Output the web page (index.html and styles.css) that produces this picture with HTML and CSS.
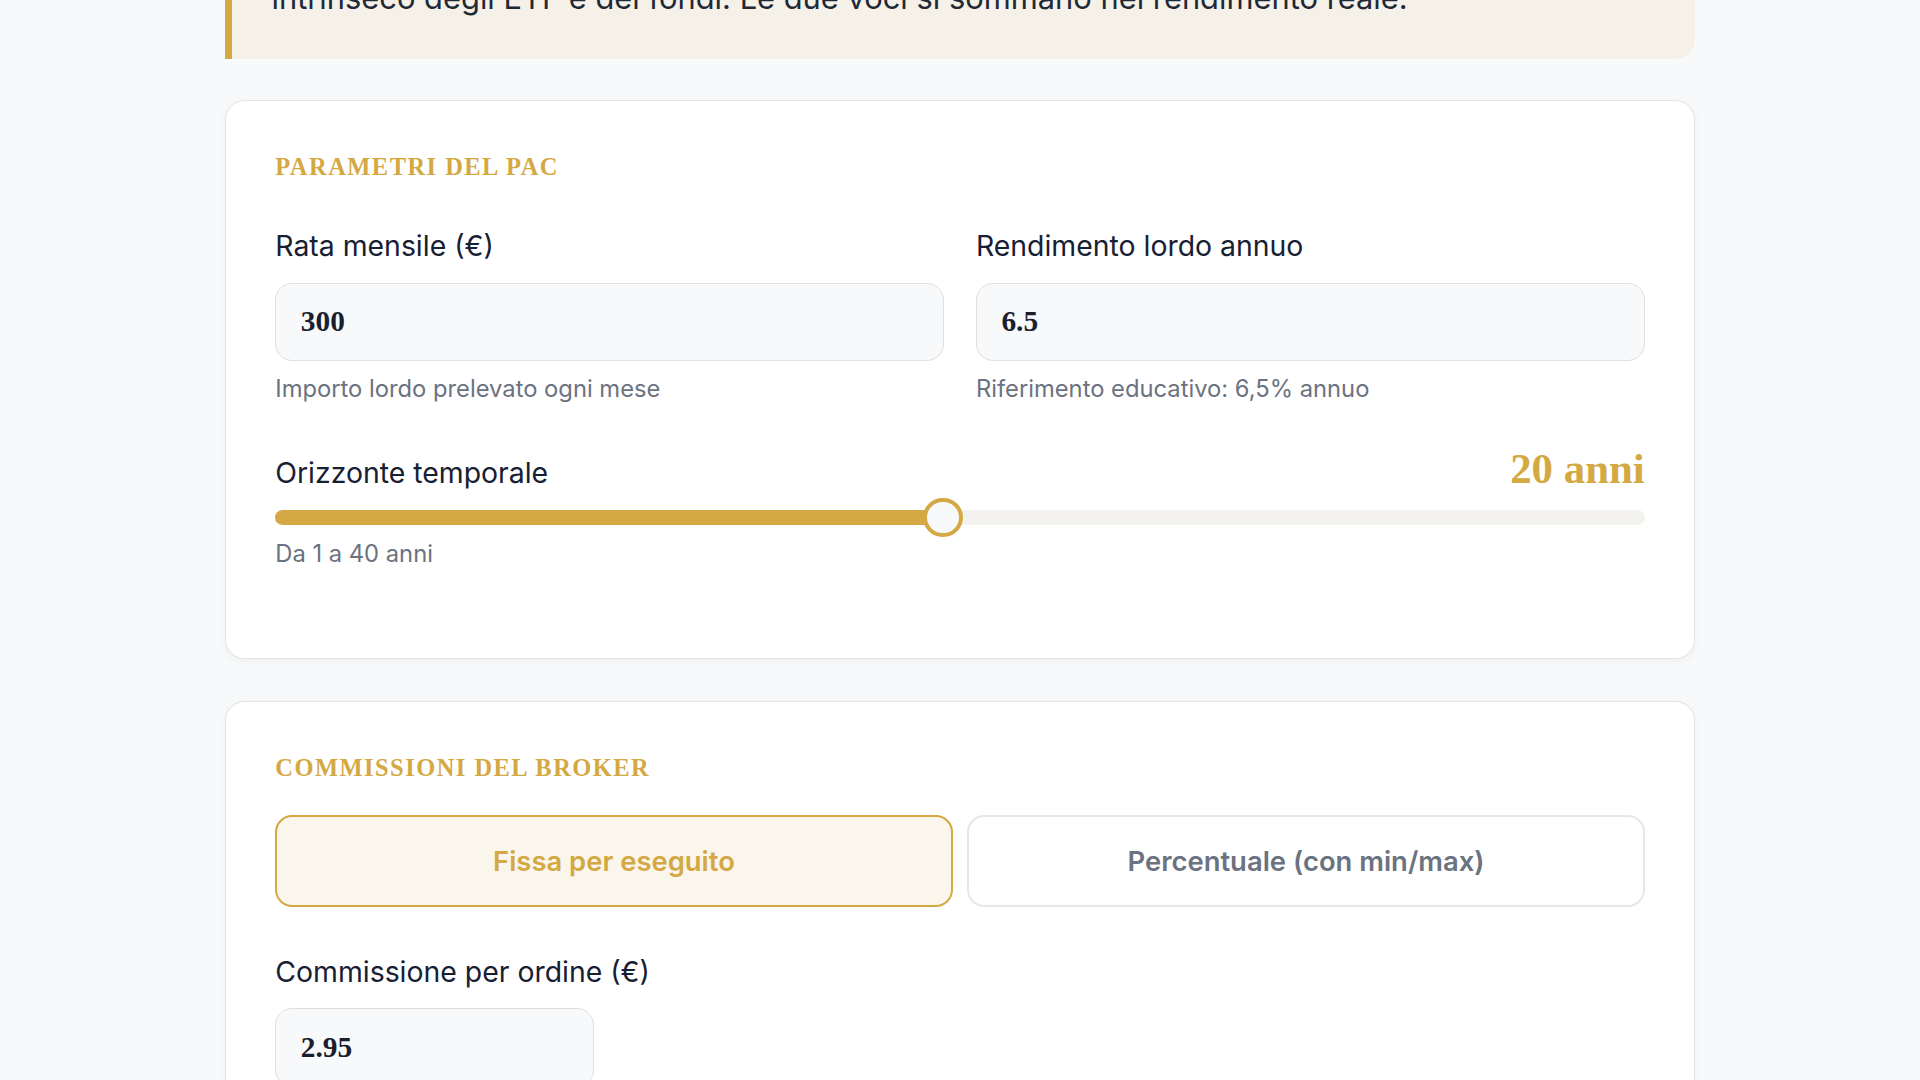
FILE: index.html
```html
<!DOCTYPE html>
<html lang="it">
<head>
<meta charset="UTF-8">
<meta name="viewport" content="width=device-width,initial-scale=1">
<title>Simulatore PAC – Commissioni del broker</title>
<link rel="stylesheet" href="styles.css">
</head>
<body>
<main class="wrap">

  <div class="note">
    <p>Nota: le commissioni del broker non vanno confuse con il TER, cioè il costo annuo di gestione<br>intrinseco degli ETF e dei fondi. Le due voci si sommano nel rendimento reale.</p>
  </div>

  <!-- parametri -->
  <section class="card">
    <h2 class="card-title">Parametri del PAC</h2>

    <div class="grid2 fields">
      <div class="field">
        <label for="rata">Rata mensile (€)</label>
        <input class="num" id="rata" type="text" value="300">
        <div class="hint">Importo lordo prelevato ogni mese</div>
      </div>
      <div class="field">
        <label for="rend">Rendimento lordo annuo</label>
        <input class="num" id="rend" type="text" value="6.5">
        <div class="hint">Riferimento educativo: 6,5% annuo</div>
      </div>
    </div>

    <div class="range-group">
      <div class="range-head">
        <label for="anni">Orizzonte temporale</label>
        <span class="range-val">20 anni</span>
      </div>
      <input class="range" id="anni" type="range" min="1" max="40" value="20" style="--pct:48.76%">
      <div class="hint">Da 1 a 40 anni</div>
    </div>
  </section>

  <!-- commissioni -->
  <section class="card">
    <h2 class="card-title">Commissioni del broker</h2>

    <div class="grid2 toggle">
      <button class="opt active">Fissa per eseguito</button>
      <button class="opt">Percentuale (con min/max)</button>
    </div>

    <div class="field fee">
      <label for="comm">Commissione per ordine (€)</label>
      <input class="num small" id="comm" type="text" value="2.95">
    </div>
  </section>

</main>
</body>
</html>
```

FILE: styles.css
```css
:root{--bg:#f8f9fa;--card:#fff;--txt:#172033;--sub:#6b7280;
      --gold:#d4a843;--gold-soft:#faf6ec;--line:#e6e3de;--note:#f5f1e8}
html{zoom:1.2245}
*{box-sizing:border-box}
body{margin:0;background:var(--bg);color:var(--txt);
     font-family:Inter,"Noto Sans",Arial,sans-serif}
.wrap{max-width:1200px;margin:-89px auto 0}

.note{background:var(--note);border-left:6px solid var(--gold);border-radius:0 16px 16px 0;
      padding:28px 32px 29px}
.note p{margin:0;font-size:25.2px;line-height:40px;color:#1f2937}

.card{background:var(--card);border:1px solid var(--line);border-radius:16px;padding:40px;
      margin-top:34px;box-shadow:0 2px 6px rgba(0,0,0,.04)}
.card-title{margin:0 0 24px;font-family:"Liberation Serif","Times New Roman",serif;font-weight:700;
      font-size:20px;line-height:28px;letter-spacing:1.2px;text-transform:uppercase;color:var(--gold)}

.grid2{display:grid;grid-template-columns:1fr 1fr}
.fields{gap:26px;margin-top:34px}
label{display:block;font-size:23.2px;line-height:32px;margin-bottom:14px}
.num{display:block;width:100%;height:64px;padding:0 20px;border:1.5px solid #e2dfda;border-radius:14px;
     background:var(--bg);color:#1a1f2e;font-family:"Liberation Serif","Times New Roman",serif;
     font-weight:700;font-size:24px;outline:none}
.num.small{width:260px}
.hint{margin-top:9px;font-size:19.4px;line-height:28px;color:var(--sub)}

.range-group{margin:38px 0 31px}
.range-head{display:flex;justify-content:space-between;align-items:baseline}
.range-head label{margin:0}
.range-val{font-family:"Liberation Serif","Times New Roman",serif;font-weight:700;font-size:35px;
     line-height:22px;color:var(--gold)}
.range{-webkit-appearance:none;appearance:none;display:block;width:100%;height:32px;margin:5px 0 0;
     background:transparent}
.range::-webkit-slider-runnable-track{height:12px;border-radius:6px;
     background:linear-gradient(to right,var(--gold) var(--pct),#f3f2ee var(--pct))}
.range::-webkit-slider-thumb{-webkit-appearance:none;width:32px;height:32px;margin-top:-10px;
     border-radius:50%;background:var(--bg);border:3.5px solid var(--gold)}
.range-group .hint{margin-top:0}

.toggle{gap:12px}
.opt{height:75px;border:2px solid #e9e7e3;border-radius:14px;background:#fff;color:var(--sub);
     font-family:inherit;font-size:22.4px;font-weight:600;cursor:pointer}
.opt.active{border-color:var(--gold);background:var(--gold-soft);color:var(--gold)}
.fee{margin-top:37px}
```
